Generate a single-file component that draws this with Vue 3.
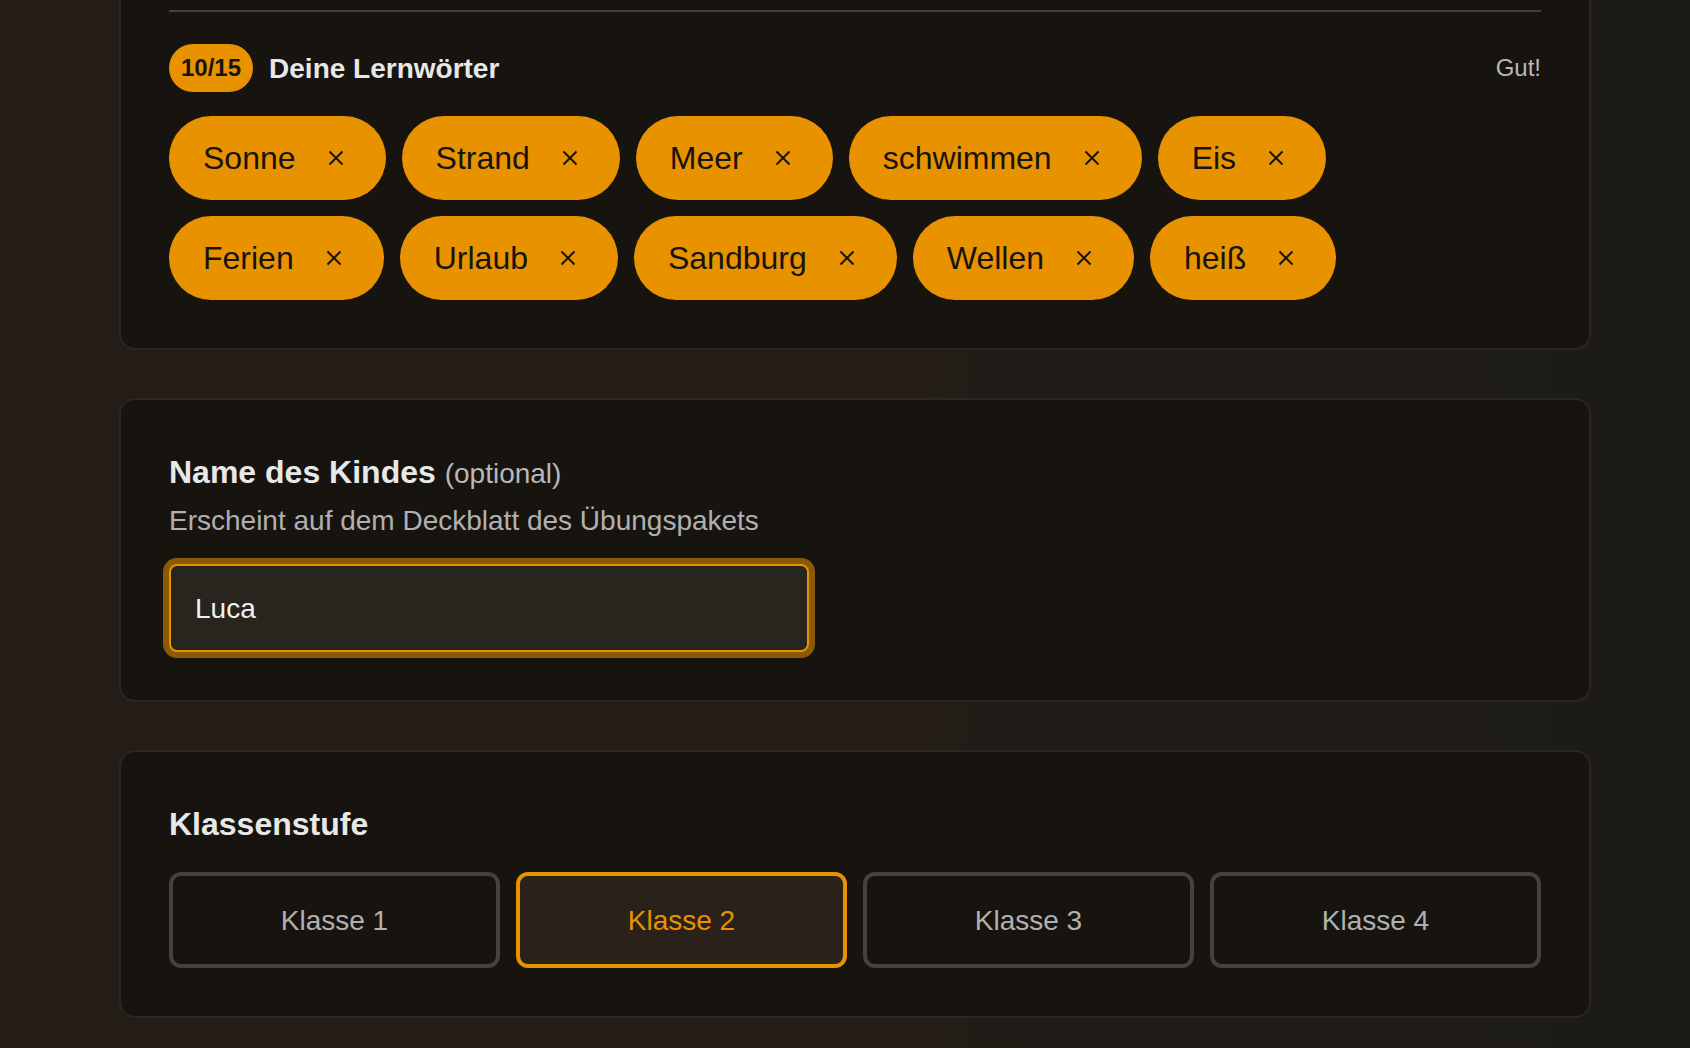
<script setup>
const rowOne = ['Sonne', 'Strand', 'Meer', 'schwimmen', 'Eis']
const rowTwo = ['Ferien', 'Urlaub', 'Sandburg', 'Wellen', 'heiß']
const grades = ['Klasse 1', 'Klasse 2', 'Klasse 3', 'Klasse 4']
const activeGrade = 'Klasse 2'
</script>

<template>
  <main class="page">
    <section class="card card-first">
      <div class="divider"></div>
      <div class="words-head">
        <span class="badge">10/15</span>
        <span class="words-title">Deine Lernwörter</span>
        <span class="words-note">Gut!</span>
      </div>
      <div class="chip-rows">
        <div v-for="(row, i) in [rowOne, rowTwo]" :key="i" class="chip-row">
          <span v-for="word in row" :key="word" class="chip">
            {{ word }}
            <svg class="chip-x" viewBox="0 0 16 16" aria-hidden="true">
              <path d="M1.5 1.5L14.5 14.5M14.5 1.5L1.5 14.5" />
            </svg>
          </span>
        </div>
      </div>
    </section>

    <section class="card">
      <h2 class="label">Name des Kindes <span class="label-hint">(optional)</span></h2>
      <p class="desc">Erscheint auf dem Deckblatt des Übungspakets</p>
      <input class="name-input" type="text" value="Luca" />
    </section>

    <section class="card">
      <h2 class="label label-grade">Klassenstufe</h2>
      <div class="grades">
        <button
          v-for="g in grades"
          :key="g"
          class="grade"
          :class="{ active: g === activeGrade }"
        >{{ g }}</button>
      </div>
    </section>
  </main>
</template>

<style>
html, body {
  margin: 0;
  background: #231c17;
}
</style>

<style scoped>
.page {
  box-sizing: border-box;
  height: 1048px;
  overflow: hidden;
  padding: 0 99px 0 119px;
  display: flex;
  flex-direction: column;
  gap: 48px;
  font-family: "Liberation Sans", Arial, sans-serif;
  background: linear-gradient(90deg, #241c17 0%, #231c17 55%, #1c1b18 100%);
}

.card {
  flex: none;
  background: #17140f;
  border: 2px solid #2a2622;
  border-radius: 16px;
  padding: 48px;
}

/* top of this card is scrolled out of view */
.card-first {
  padding-top: 0;
  border-top: 0;
  border-top-left-radius: 0;
  border-top-right-radius: 0;
}

.divider {
  height: 2px;
  margin-top: 10px;
  background: #444240;
}

.words-head {
  display: flex;
  align-items: center;
  gap: 16px;
  margin-top: 32px;
}

.badge {
  background: #e89200;
  color: #17140f;
  font-size: 24px;
  font-weight: 700;
  line-height: 48px;
  padding: 0 12px;
  border-radius: 24px;
}

.words-title {
  padding-top: 2px;
  font-size: 28px;
  font-weight: 700;
  color: #e8e8e8;
}

.words-note {
  margin-left: auto;
  font-size: 24px;
  color: #b8b8b8;
}

.chip-rows {
  display: flex;
  flex-direction: column;
  gap: 16px;
  margin-top: 24px;
}

.chip-row {
  display: flex;
  gap: 16px;
}

.chip {
  display: inline-flex;
  align-items: center;
  gap: 32px;
  height: 84px;
  padding: 0 42px 0 34px;
  border-radius: 42px;
  background: #e89200;
  color: #17140f;
  font-size: 32px;
}

.chip-x {
  width: 16px;
  height: 16px;
  fill: none;
  stroke: #17140f;
  stroke-width: 2;
}

.label {
  margin: 0;
  font-size: 32px;
  line-height: 48px;
  font-weight: 700;
  color: #e8e8e8;
}

.label-hint {
  font-size: 28px;
  font-weight: 400;
  color: #b8b8b8;
}

.desc {
  margin: 3px 0 23px;
  font-size: 28px;
  line-height: 40px;
  color: #b0b0b0;
}

.name-input {
  display: block;
  box-sizing: border-box;
  width: 640px;
  height: 88px;
  padding: 2px 24px 0;
  font: 28px "Liberation Sans", Arial, sans-serif;
  color: #f0f0f0;
  background: #28241e;
  border: 2px solid #e89200;
  border-radius: 8px;
  outline: none;
  box-shadow: 0 0 0 6px #8a5a06;
}

.label-grade {
  margin-bottom: 24px;
}

.grades {
  display: grid;
  grid-template-columns: repeat(4, 1fr);
  gap: 16px;
}

.grade {
  height: 96px;
  padding: 2px 0 0;
  font: 28px "Liberation Sans", Arial, sans-serif;
  color: #b0b0b0;
  background: #17140f;
  border: 4px solid #444240;
  border-radius: 12px;
}

.grade.active {
  color: #e89200;
  background: #2a211b;
  border-color: #e89200;
}
</style>
